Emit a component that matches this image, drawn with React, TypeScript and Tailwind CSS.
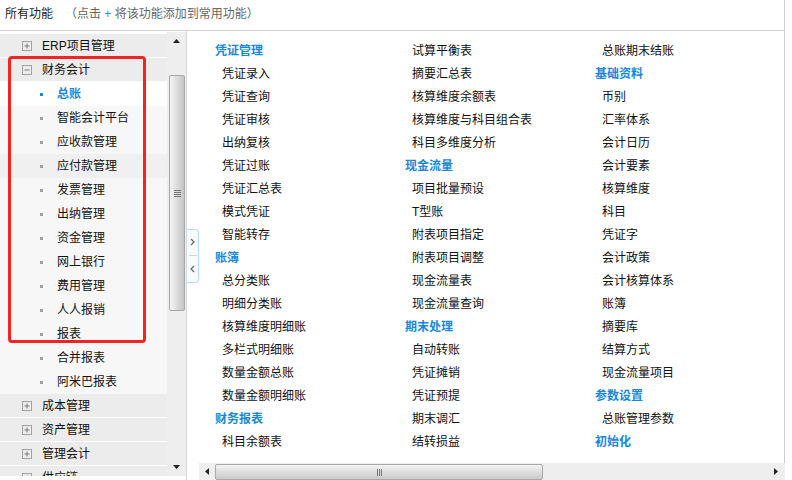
import React from 'react'

type Row = { label: string; level: 0 | 1; open?: boolean; active?: boolean; hover?: boolean }

const tree: Row[] = [
  { label: 'ERP项目管理', level: 0 },
  { label: '财务会计', level: 0, open: true },
  { label: '总账', level: 1, active: true },
  { label: '智能会计平台', level: 1 },
  { label: '应收款管理', level: 1 },
  { label: '应付款管理', level: 1, hover: true },
  { label: '发票管理', level: 1 },
  { label: '出纳管理', level: 1 },
  { label: '资金管理', level: 1 },
  { label: '网上银行', level: 1 },
  { label: '费用管理', level: 1 },
  { label: '人人报销', level: 1 },
  { label: '报表', level: 1 },
  { label: '合并报表', level: 1 },
  { label: '阿米巴报表', level: 1 },
  { label: '成本管理', level: 0 },
  { label: '资产管理', level: 0 },
  { label: '管理会计', level: 0 },
  { label: '供应链', level: 0 },
]

// '#' 开头表示分组标题
const columns: string[][] = [
  ['#凭证管理', '凭证录入', '凭证查询', '凭证审核', '出纳复核', '凭证过账', '凭证汇总表', '模式凭证', '智能转存', '#账簿', '总分类账', '明细分类账', '核算维度明细账', '多栏式明细账', '数量金额总账', '数量金额明细账', '#财务报表', '科目余额表'],
  ['试算平衡表', '摘要汇总表', '核算维度余额表', '核算维度与科目组合表', '科目多维度分析', '#现金流量', '项目批量预设', 'T型账', '附表项目指定', '附表项目调整', '现金流量表', '现金流量查询', '#期末处理', '自动转账', '凭证摊销', '凭证预提', '期末调汇', '结转损益'],
  ['总账期末结账', '#基础资料', '币别', '汇率体系', '会计日历', '会计要素', '核算维度', '科目', '凭证字', '会计政策', '会计核算体系', '账簿', '摘要库', '结算方式', '现金流量项目', '#参数设置', '总账管理参数', '#初始化'],
]

function PlusMinus({ open }: { open?: boolean }) {
  return (
    <svg width="10" height="10" viewBox="0 0 10 10" className="shrink-0">
      <rect x="0.5" y="0.5" width="9" height="9" fill="none" stroke="#a3a3a3" />
      <line x1="2.5" y1="5" x2="7.5" y2="5" stroke="#7a7a7a" />
      {!open && <line x1="5" y1="2.5" x2="5" y2="7.5" stroke="#7a7a7a" />}
    </svg>
  )
}

function TreeRow({ row }: { row: Row }) {
  if (row.level === 0) {
    return (
      <div className="h-[24px] shrink-0 flex items-center bg-[#ececec] border-b border-white pl-[22px] gap-[10px] text-[#111]">
        <PlusMinus open={row.open} />
        <span>{row.label}</span>
      </div>
    )
  }
  const bg = row.active ? 'bg-white' : row.hover ? 'bg-[#f0f0f0]' : 'bg-[#f7f7f7]'
  return (
    <div className={`h-[24px] shrink-0 flex items-center pl-[40px] gap-[14px] ${bg}`}>
      <span className={`w-[3px] h-[3px] ${row.active ? 'bg-[#1788d9]' : 'bg-[#a0a0a0]'}`} />
      <span className={row.active ? 'text-[#1788d9] font-bold' : 'text-[#111]'}>{row.label}</span>
    </div>
  )
}

function VScroll() {
  return (
    <div className="w-[19px] bg-[#eeeeee] flex flex-col">
      <div className="h-[18px] flex items-center justify-center">
        <svg width="7" height="4" viewBox="0 0 7 4"><polygon points="3.5,0 7,4 0,4" fill="#222" /></svg>
      </div>
      <div className="flex-1 pt-[25px] pl-[2px] pr-[1px]">
        <div className="h-[236px] rounded-[2px] border border-[#a8a8a8] bg-gradient-to-r from-[#f4f4f4] via-[#dcdcdc] to-[#c4c4c4] flex items-center justify-center">
          <div className="flex flex-col gap-[1px]">
            <div className="w-[7px] h-[1px] bg-[#777]" />
            <div className="w-[7px] h-[1px] bg-[#777]" />
            <div className="w-[7px] h-[1px] bg-[#777]" />
            <div className="w-[7px] h-[1px] bg-[#777]" />
          </div>
        </div>
      </div>
      <div className="h-[18px] flex items-center justify-center">
        <svg width="7" height="4" viewBox="0 0 7 4"><polygon points="0,0 7,0 3.5,4" fill="#222" /></svg>
      </div>
    </div>
  )
}

function HScroll() {
  return (
    <div className="h-[17px] bg-[#eeeeee] flex items-center">
      <div className="w-[16px] flex items-center justify-center">
        <svg width="4" height="7" viewBox="0 0 4 7"><polygon points="4,0 4,7 0,3.5" fill="#222" /></svg>
      </div>
      <div className="w-[328px] h-[16px] mt-[1px] rounded-[2px] border border-[#a8a8a8] bg-gradient-to-b from-[#f4f4f4] via-[#dedede] to-[#cacaca] flex items-center justify-center">
        <div className="flex gap-[1px]">
          <div className="w-[1px] h-[7px] bg-[#777]" />
          <div className="w-[1px] h-[7px] bg-[#777]" />
          <div className="w-[1px] h-[7px] bg-[#777]" />
        </div>
      </div>
      <div className="flex-1" />
      <div className="w-[18px] flex items-center justify-center">
        <svg width="4" height="7" viewBox="0 0 4 7"><polygon points="0,0 4,3.5 0,7" fill="#222" /></svg>
      </div>
    </div>
  )
}

function CollapseTab() {
  return (
    <div className="w-[12px] h-[54px] rounded-r-[4px] border border-l-0 border-[#b9dcf5] bg-[#f6fbff] flex flex-col items-center">
      <div className="flex-1 flex items-center justify-center">
        <svg width="5" height="8" viewBox="0 0 5 8"><polyline points="1,1 4,4 1,7" fill="none" stroke="#666" strokeWidth="1.2" /></svg>
      </div>
      <div className="w-[8px] h-[1px] bg-[#c8d8e8]" />
      <div className="flex-1 flex items-center justify-center">
        <svg width="5" height="8" viewBox="0 0 5 8"><polyline points="4,1 1,4 4,7" fill="none" stroke="#666" strokeWidth="1.2" /></svg>
      </div>
    </div>
  )
}

export default function App() {
  return (
    <div
      className="w-[792px] h-[480px] bg-white flex overflow-hidden text-[12px] leading-none"
      style={{ fontFamily: '"Liberation Sans", "Noto Sans CJK SC", sans-serif' }}
    >
      <div className="w-[785px] border-r border-[#cdcdcd] flex flex-col">
        <div className="h-[31px] shrink-0 border-b border-[#d2d2d2] flex items-center pl-[5px] pb-[2px]">
          <span className="text-[#222]">所有功能</span>
          <span className="ml-[12px] text-[#666]">
            （点击 <span className="text-[#3a8ad0]">+</span> 将该功能添加到常用功能）
          </span>
        </div>

        <div className="h-[449px] flex">
          <div className="relative w-[187px] border-r border-[#d8d8d8] flex pt-[1px] pb-[4px]">
            <div className="w-[167px] pt-[2px] flex flex-col overflow-hidden">
              {tree.map((r) => (
                <TreeRow key={r.label} row={r} />
              ))}
            </div>
            <VScroll />
            <div className="absolute left-[8px] top-[25px] w-[138px] h-[287px] border-[3px] border-[#f42323] rounded-[4px] pointer-events-none" />
          </div>

          <div className="w-[12px] flex items-center">
            <CollapseTab />
          </div>

          <div className="flex-1 flex flex-col">
            <div className="flex-1 flex pl-[16px] pt-[8px] overflow-hidden">
              {columns.map((col, ci) => (
                <div key={ci} className="w-[190px] flex flex-col">
                  {col.map((item) =>
                    item.startsWith('#') ? (
                      <div key={item} className="h-[23px] flex items-center font-bold text-[#1788d9]">
                        {item.slice(1)}
                      </div>
                    ) : (
                      <div key={item} className="h-[23px] flex items-center pl-[7px] text-[#111]">
                        {item}
                      </div>
                    ),
                  )}
                </div>
              ))}
            </div>
            <HScroll />
          </div>
        </div>
      </div>
    </div>
  )
}
